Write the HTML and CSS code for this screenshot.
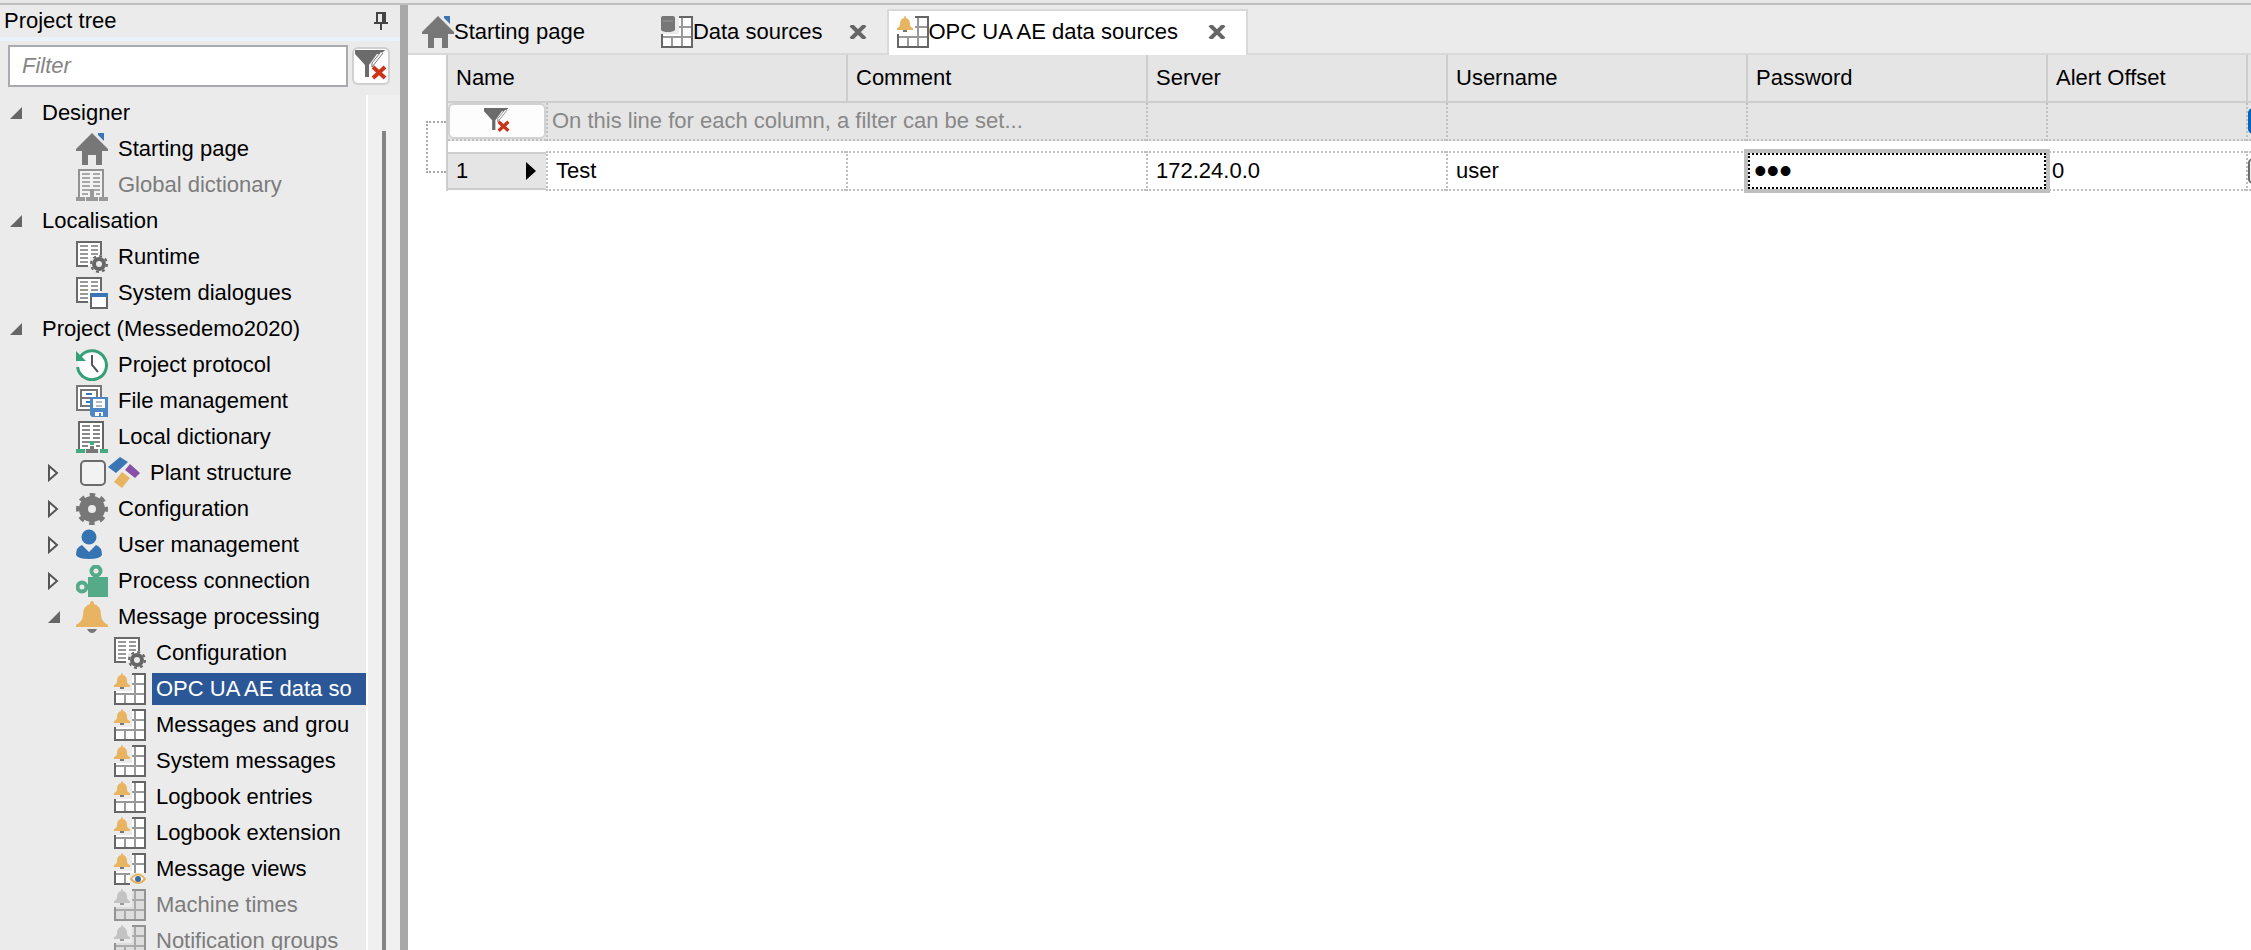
FILE: index.html
```html
<!DOCTYPE html>
<html lang="en">
<head>
  <meta charset="UTF-8">
  <title>OPC UA AE data sources</title>
  <link rel="stylesheet" href="styles.css">
</head>
<body>
  <svg class="sprite" aria-hidden="true">
    <symbol id="home" viewBox="0 0 32 32">
      <path fill="#777" d="M16 0L32 16V18H26V32H20V22H12V32H6V18H0V16Z"/>
      <path fill="#3a75b5" d="M22 0h6v8l-6-6z"/>
    </symbol>
    <symbol id="dictionary" viewBox="0 0 32 32">
      <path fill="#fff" stroke="#666" stroke-width="2" d="M3 28V1H27V28"/>
      <path stroke="#888" stroke-width="2" d="M6 5h8M17 5h7M6 9h8M17 9h7M6 13h8M17 13h7M6 17h8M17 17h7M6 21h8M17 21h7M6 25h6M20 25h4"/>
      <path fill="#45a981" d="M14 20h4v4h-4zM0 28h9v4H0zM24 28h8v4h-8z"/>
      <path fill="#777" d="M14 25h4v3h4v4H10v-4h4z"/>
    </symbol>
    <symbol id="dictionary-off" viewBox="0 0 32 32">
      <path fill="#f2f2f2" stroke="#929292" stroke-width="2" d="M3 28V1H27V28"/>
      <path stroke="#a8a8a8" stroke-width="2" d="M6 5h8M17 5h7M6 9h8M17 9h7M6 13h8M17 13h7M6 17h8M17 17h7M6 21h8M17 21h7M6 25h6M20 25h4"/>
      <path fill="#999" d="M14 20h4v8h4v4H10v-4h4zM0 28h9v4H0zM23 28h9v4h-9z"/>
    </symbol>
    <symbol id="page" viewBox="0 0 32 32">
      <path fill="#fff" d="M1 1h24v15H14v9H1z"/>
      <path fill="none" stroke="#696969" stroke-width="2" d="M25 14V1H1V25H12"/>
      <path stroke="#999" stroke-width="2" d="M4 5h8M15 5h7M4 9h8M15 9h7M4 13h8M15 13h7M4 17h8M4 21h8"/>
    </symbol>
    <symbol id="page-gear" viewBox="0 0 32 32">
      <use href="#page"/>
      <circle cx="23" cy="23" r="5" fill="#ebebeb" stroke="#666" stroke-width="4"/>
      <circle cx="23" cy="23" r="8" fill="none" stroke="#666" stroke-width="2" stroke-dasharray="3 3.28"/>
    </symbol>
    <symbol id="page-window" viewBox="0 0 32 32">
      <use href="#page"/>
      <path fill="#fff" stroke="#666" stroke-width="2" d="M15 17h16v14H15z"/>
      <path fill="#3a75b5" d="M14 16h18v4H14z"/>
    </symbol>
    <symbol id="history" viewBox="0 0 32 32">
      <circle cx="16" cy="16" r="14" fill="#fff"/>
      <path fill="none" stroke="#36a078" stroke-width="3" d="M4 8A14.5 14.5 0 1 1 1.600 18"/>
      <path fill="#36a078" d="M0 2L10 12H0z"/>
      <path fill="none" stroke="#555" stroke-width="2" d="M16 6V16L22 23"/>
    </symbol>
    <symbol id="files" viewBox="0 0 32 32">
      <path fill="#fff" stroke="#777" stroke-width="2" d="M1 1h24v24H1z"/>
      <path fill="none" stroke="#777" stroke-width="2" d="M5 5h16v8H5zM5 13h16v8H5z"/>
      <path stroke="#3a75b5" stroke-width="2" d="M10 9h6M10 17h4"/>
      <path fill="#4c86c4" d="M14 12h18v20H16l-2-2z"/>
      <path fill="#fff" d="M17 14h12v9H17zM19 27h8v4h-2v-3h-2v3h-4z"/>
      <path stroke="#bbb" stroke-width="2" d="M20 17h6M20 21h6"/>
    </symbol>
    <symbol id="plant" viewBox="0 0 32 32">
      <path fill="#3a75b5" d="M12 0L20 5L8 16L0 10Z"/>
      <path fill="#e8b462" d="M14 15L22 21L14 31L6 25Z"/>
      <path fill="#894fa8" d="M22 7L32 16L27 21L17 13Z"/>
    </symbol>
    <symbol id="gear" viewBox="0 0 32 32">
      <circle cx="16" cy="16" r="8.500" fill="none" stroke="#777" stroke-width="9"/>
      <circle cx="16" cy="16" r="14" fill="none" stroke="#777" stroke-width="4" stroke-dasharray="5.500 5.495" stroke-dashoffset="2.750"/>
    </symbol>
    <symbol id="user" viewBox="0 0 32 32">
      <circle cx="13" cy="8" r="7.500" fill="#3673b3"/>
      <path fill="#3673b3" d="M6 16L13 23L20 16Q26 18 26 26Q24 30 13 30Q2 30 0 26Q0 18 6 16Z"/>
    </symbol>
    <symbol id="process" viewBox="0 0 32 32">
      <circle cx="20" cy="6" r="4.500" fill="#ebebeb" stroke="#55ab89" stroke-width="4"/>
      <circle cx="6" cy="22" r="4.500" fill="#ebebeb" stroke="#55ab89" stroke-width="4"/>
      <path fill="#55ab89" d="M12 12H32V32H12Z"/>
    </symbol>
    <symbol id="bell" viewBox="0 0 32 32">
      <path fill="#e8b462" d="M16 0Q18 0 18 3Q25 5 25 14Q25 20 32 24V26H0V24Q7 20 7 14Q7 5 14 3Q14 0 16 0Z"/>
      <path fill="#777" d="M11 28h10q-2 4-5 4t-5-4z"/>
    </symbol>
    <symbol id="cells" viewBox="0 0 32 32">
      <path fill="#fff" d="M18 1h13v30H1V18h17z"/>
      <path stroke="#999" stroke-width="2" fill="none" d="M21 2V30M11 20V30M18 11H30M2 21H30"/>
      <path fill="none" stroke="#666" stroke-width="2" d="M18 1H31V31H1V18"/>
    </symbol>
    <symbol id="alarm-table" viewBox="0 0 32 32">
      <use href="#cells"/>
      <path fill="#e8b462" d="M8 0Q9 0 9 2Q13 3 13 8Q13 11 16 12V14H0V12Q3 11 3 8Q3 3 7 2Q7 0 8 0Z"/>
      <path fill="#777" d="M6 14h4v2H6z"/>
    </symbol>
    <symbol id="alarm-view" viewBox="0 0 32 32">
      <use href="#alarm-table"/>
      <path fill="#ebebeb" d="M16 20h16v12H16z"/>
      <path fill="#fff" stroke="#e8b462" stroke-width="2" d="M17 26Q24 17 31 26Q24 34 17 26Z"/>
      <circle cx="24" cy="26" r="3" fill="#3a6aa0"/>
    </symbol>
    <symbol id="alarm-off" viewBox="0 0 32 32">
      <path fill="#ddd" d="M18 1h13v30H1V18h17z"/>
      <path stroke="#aaa" stroke-width="2" fill="none" d="M21 2V30M11 20V30M18 11H30M2 21H30"/>
      <path fill="none" stroke="#939393" stroke-width="2" d="M18 1H31V31H1V18"/>
      <path fill="#c3c3c3" d="M8 0Q9 0 9 2Q13 3 13 8Q13 11 16 12V14H0V12Q3 11 3 8Q3 3 7 2Q7 0 8 0Z"/>
      <path fill="#999" d="M6 14h4v2H6z"/>
    </symbol>
    <symbol id="data-table" viewBox="0 0 32 32">
      <use href="#cells"/>
      <path fill="#777" d="M0 2Q0 0 2 0H12Q14 0 14 2V14Q12 16 7 16T0 14Z"/>
      <path stroke="#999" stroke-width="1" d="M2 5h10"/>
    </symbol>
    <symbol id="funnel" viewBox="0 0 32 32">
      <path fill="#6b6b6b" d="M0 0H30L26 4H22L14 15V27H10V15L0 4Z"/>
      <path fill="#fff" d="M26 2L17 13L18 16L28 4Z"/>
      <path fill="none" stroke="#777" stroke-width="1" d="M25 3L17 13V17L28 3"/>
      <path stroke="#ca3517" stroke-width="4" d="M18 17L30 28M30 17L18 28"/>
    </symbol>
    <symbol id="cross" viewBox="0 0 18 14">
      <path stroke="#666" stroke-width="4" d="M2 0L16 14M16 0L2 14"/>
    </symbol>
    <symbol id="open" viewBox="0 0 12 12">
      <path fill="#666" d="M12 0V12H0Z"/>
    </symbol>
    <symbol id="closed" viewBox="0 0 12 18">
      <path fill="#f4f4f4" stroke="#555" stroke-width="2" d="M1 2L9 9L1 16Z"/>
    </symbol>
    <symbol id="pin" viewBox="0 0 14 18">
      <path fill="#444" d="M2 0H12V10H14V12H8V18H6V12H0V10H2ZM4 2V10H8V2Z"/>
    </symbol>
  </svg>

  <div class="app">
    <aside class="sidebar">
      <div class="sidebar-title">
        <span>Project tree</span>
        <button class="pin" aria-label="Pin"><svg><use href="#pin"/></svg></button>
      </div>
      <div class="search">
        <input type="text" placeholder="Filter" aria-label="Filter">
        <button aria-label="Clear filter"><svg class="funnel"><use href="#funnel"/></svg></button>
      </div>
      <div class="tree-area">
        <nav class="tree">
          <div class="row group"><button class="toggle" aria-label="Collapse"><svg><use href="#open"/></svg></button><a href="#">Designer</a></div>
          <div class="row item"><svg class="icon"><use href="#home"/></svg><a href="#">Starting page</a></div>
          <div class="row item disabled"><svg class="icon"><use href="#dictionary-off"/></svg><a href="#">Global dictionary</a></div>
          <div class="row group"><button class="toggle" aria-label="Collapse"><svg><use href="#open"/></svg></button><a href="#">Localisation</a></div>
          <div class="row item"><svg class="icon"><use href="#page-gear"/></svg><a href="#">Runtime</a></div>
          <div class="row item"><svg class="icon"><use href="#page-window"/></svg><a href="#">System dialogues</a></div>
          <div class="row group"><button class="toggle" aria-label="Collapse"><svg><use href="#open"/></svg></button><a href="#">Project (Messedemo2020)</a></div>
          <div class="row item"><svg class="icon"><use href="#history"/></svg><a href="#">Project protocol</a></div>
          <div class="row item"><svg class="icon"><use href="#files"/></svg><a href="#">File management</a></div>
          <div class="row item"><svg class="icon"><use href="#dictionary"/></svg><a href="#">Local dictionary</a></div>
          <div class="row branch"><button class="toggle closed" aria-label="Expand"><svg><use href="#closed"/></svg></button><input type="checkbox" id="plant-check"><svg class="icon"><use href="#plant"/></svg><label for="plant-check">Plant structure</label></div>
          <div class="row branch"><button class="toggle closed" aria-label="Expand"><svg><use href="#closed"/></svg></button><svg class="icon"><use href="#gear"/></svg><a href="#">Configuration</a></div>
          <div class="row branch"><button class="toggle closed" aria-label="Expand"><svg><use href="#closed"/></svg></button><svg class="icon"><use href="#user"/></svg><a href="#">User management</a></div>
          <div class="row branch"><button class="toggle closed" aria-label="Expand"><svg><use href="#closed"/></svg></button><svg class="icon"><use href="#process"/></svg><a href="#">Process connection</a></div>
          <div class="row branch"><button class="toggle" aria-label="Collapse"><svg><use href="#open"/></svg></button><svg class="icon"><use href="#bell"/></svg><a href="#">Message processing</a></div>
          <div class="row leaf"><svg class="icon"><use href="#page-gear"/></svg><a href="#">Configuration</a></div>
          <div class="row leaf selected"><svg class="icon"><use href="#alarm-table"/></svg><a href="#">OPC UA AE data so</a></div>
          <div class="row leaf"><svg class="icon"><use href="#alarm-table"/></svg><a href="#">Messages and grou</a></div>
          <div class="row leaf"><svg class="icon"><use href="#alarm-table"/></svg><a href="#">System messages</a></div>
          <div class="row leaf"><svg class="icon"><use href="#alarm-table"/></svg><a href="#">Logbook entries</a></div>
          <div class="row leaf"><svg class="icon"><use href="#alarm-table"/></svg><a href="#">Logbook extension</a></div>
          <div class="row leaf"><svg class="icon"><use href="#alarm-view"/></svg><a href="#">Message views</a></div>
          <div class="row leaf disabled"><svg class="icon"><use href="#alarm-off"/></svg><a href="#">Machine times</a></div>
          <div class="row leaf disabled"><svg class="icon"><use href="#alarm-off"/></svg><a href="#">Notification groups</a></div>
        </nav>
        <div class="scrollbar"><div class="thumb"></div></div>
      </div>
    </aside>

    <main class="content">
      <div class="tabs">
        <div class="tab"><svg class="icon"><use href="#home"/></svg><a href="#">Starting page</a></div>
        <div class="tab sources"><svg class="icon"><use href="#data-table"/></svg><a href="#">Data sources</a><button class="close" aria-label="Close"><svg><use href="#cross"/></svg></button></div>
        <div class="tab active"><svg class="icon"><use href="#alarm-table"/></svg><a href="#">OPC UA AE data sources</a><button class="close" aria-label="Close"><svg><use href="#cross"/></svg></button></div>
      </div>
      <div class="grid">
        <div class="connector"></div>
        <table>
          <colgroup>
            <col class="c-head"><col class="c-wide"><col class="c-wide"><col class="c-wide"><col class="c-wide"><col class="c-wide"><col class="c-offset"><col class="c-check">
          </colgroup>
          <thead>
            <tr class="titles">
              <th colspan="2">Name</th>
              <th>Comment</th>
              <th>Server</th>
              <th>Username</th>
              <th>Password</th>
              <th>Alert Offset</th>
              <th></th>
            </tr>
            <tr class="filters">
              <td class="filter-cell"><button aria-label="Clear column filters"><svg class="funnel"><use href="#funnel"/></svg></button></td>
              <td colspan="2" class="hint">On this line for each column, a filter can be set...</td>
              <td></td>
              <td></td>
              <td></td>
              <td></td>
              <td class="check"><input type="checkbox" class="blue" aria-label="Filter active"></td>
            </tr>
          </thead>
          <tbody>
            <tr>
              <th scope="row"><div class="row-head"><span>1</span><svg viewBox="0 0 10 18"><path d="M0 0L10 9L0 18Z"/></svg></div></th>
              <td>Test</td>
              <td></td>
              <td>172.24.0.0</td>
              <td>user</td>
              <td class="editing"><input type="password" value="abc" aria-label="Password"></td>
              <td class="offset">0</td>
              <td class="check"><input type="checkbox" aria-label="Active"></td>
            </tr>
          </tbody>
        </table>
      </div>
    </main>
  </div>
</body>
</html>
```
FILE: styles.css
```css
* {
  box-sizing: border-box;
}

body {
  margin: 0;
  font-family: "Liberation Sans", Arial, sans-serif;
  font-size: 22px;
  line-height: 28px;
  color: #000;
  background-color: #fff;
}

a {
  color: inherit;
  text-decoration: none;
}

button {
  padding: 0;
  border: none;
  background: none;
}

svg {
  display: block;
}

input[type="checkbox"] {
  appearance: none;
  flex: none;
  width: 26px;
  height: 26px;
  margin: 0;
  border: 2px solid #6b6b6b;
  border-radius: 5px;
  background-color: #f2f2f2;
}

.sprite {
  position: absolute;
  width: 0;
  height: 0;
}

.icon {
  flex: none;
  width: 32px;
  height: 32px;
}

.funnel {
  width: 32px;
  height: 32px;
}

.app {
  display: flex;
  height: 100vh;
  overflow: hidden;
  padding-top: 5px;
  background: linear-gradient(#e6e6e6 3px, #bebebe 3px 5px, #fff 5px);
}

/* left panel */

.sidebar {
  display: flex;
  flex-direction: column;
  flex: none;
  width: 408px;
  border-right: 8px solid #a8a8a8;
  background-color: #ebebeb;
}

.sidebar-title {
  display: flex;
  justify-content: space-between;
  align-items: center;
  flex: none;
  height: 36px;
  padding: 0 12px 0 4px;
  border-bottom: 4px solid #eaf3fb;
}

.pin svg {
  width: 14px;
  height: 18px;
}

.search {
  display: flex;
  align-items: center;
  gap: 4px;
  padding: 4px 10px 8px 8px;
}

.search input {
  flex: 1;
  min-width: 0;
  height: 42px;
  padding: 0 12px;
  border: 2px solid #a9a9b0;
  font: italic 22px "Liberation Sans", Arial, sans-serif;
}

.search input::placeholder {
  color: #858585;
}

.search button {
  display: flex;
  justify-content: center;
  align-items: center;
  width: 38px;
  height: 38px;
  border: 2px solid #d0d0d0;
  border-radius: 6px;
  background-color: #fdfdfd;
}

.tree-area {
  display: flex;
  flex: 1;
  min-height: 0;
}

.tree {
  flex: 1;
  min-width: 0;
  overflow: hidden;
}

.row {
  display: flex;
  align-items: center;
  height: 36px;
  white-space: nowrap;
}

.row a,
.row label {
  margin-left: 6px;
  padding: 2px 4px;
}

.group {
  padding-left: 10px;
}

.group a {
  margin-left: 16px;
}

.item {
  padding-left: 76px;
}

.branch {
  padding-left: 48px;
}

.branch .toggle {
  margin-right: 16px;
}

.branch input[type="checkbox"] {
  margin: 0 2px 0 4px;
}

.leaf {
  padding-left: 114px;
}

.toggle svg {
  width: 12px;
  height: 12px;
}

.toggle.closed svg {
  height: 18px;
}

.disabled {
  color: #7c7c7c;
}

.selected a {
  flex: 1;
  color: #fff;
  background-color: #2b5797;
}

.scrollbar {
  width: 34px;
  padding: 36px 14px 0;
  border-left: 2px solid #fff;
  background-color: #f0f0f0;
}

.thumb {
  width: 4px;
  height: 100%;
  background-color: #858585;
}

/* right side */

.content {
  flex: 1;
  min-width: 0;
  overflow: hidden;
}

.tabs {
  display: flex;
  align-items: flex-end;
  height: 50px;
  padding: 4px 0 0 4px;
  background-color: #ebebeb;
  box-shadow: inset 0 -2px #d9d9d9;
}

.tab {
  display: flex;
  align-items: center;
  height: 46px;
  padding: 0 10px 2px 8px;
  border: 2px solid transparent;
  border-bottom: none;
  white-space: nowrap;
}

.sources {
  margin-left: 54px;
}

.active {
  margin-left: 8px;
  padding-right: 20px;
  border-color: #d9d9d9;
  background-color: #fff;
}

.close {
  margin-left: 26px;
}

.active .close {
  margin-left: 30px;
}

.close svg {
  width: 18px;
  height: 14px;
}

.grid {
  display: flex;
}

.connector {
  flex: none;
  width: 20px;
  height: 52px;
  margin: 66px 0 0 18px;
  border: 2px dotted #aaa;
  border-right: none;
}

table {
  flex: none;
  width: 1900px;
  table-layout: fixed;
  border-spacing: 0;
  border-left: 2px solid #cdcdcd;
}

.c-head {
  width: 98px;
}

.c-wide {
  width: 300px;
}

.c-offset {
  width: 200px;
}

th,
td {
  padding: 0 8px;
  font-weight: normal;
  text-align: left;
  white-space: nowrap;
}

td {
  border-left: 2px dotted #bfbfbf;
}

.titles th {
  height: 48px;
  border-bottom: 2px solid #cdcdcd;
  border-left: 2px solid #cdcdcd;
  background-color: #e5e5e5;
}

.titles th:first-child {
  border-left: none;
}

.filters td {
  height: 38px;
  border-bottom: 2px dotted #bfbfbf;
  background-color: #e5e5e5;
}

.filters .filter-cell {
  padding: 0;
  border-left: none;
}

.filter-cell button {
  display: flex;
  justify-content: center;
  align-items: center;
  width: 98px;
  height: 36px;
  border: 2px solid #d2d2d2;
  border-radius: 6px;
  background-color: #fdfdfd;
}

.filter-cell .funnel {
  width: 26px;
  height: 26px;
}

.filters .hint {
  padding-left: 4px;
  color: #888;
}

tbody::before {
  content: "";
  display: block;
  height: 10px;
}

tbody td {
  height: 40px;
  border-top: 2px dotted #bfbfbf;
  border-bottom: 2px dotted #bfbfbf;
}

tbody th {
  padding: 0;
}

.row-head {
  display: flex;
  justify-content: space-between;
  align-items: center;
  height: 38px;
  padding: 0 10px 0 8px;
  border-top: 2px solid #cdcdcd;
  border-bottom: 2px solid #cdcdcd;
  background-color: #e5e5e5;
}

.row-head svg {
  width: 10px;
  height: 18px;
}

.editing {
  position: relative;
}

.editing input {
  position: absolute;
  top: -4px;
  left: -4px;
  width: 306px;
  height: 44px;
  padding: 0 6px;
  border: 4px solid #bfbfbf;
  outline: 2px dotted #000;
  outline-offset: -6px;
  font: 36px "Liberation Sans", Arial, sans-serif;
}

td.offset {
  padding-left: 4px;
}

td.check {
  padding: 0;
}

td.check input {
  display: block;
}

input[type="checkbox"].blue {
  border-color: #0563c1;
  background-color: #0563c1;
}
```
